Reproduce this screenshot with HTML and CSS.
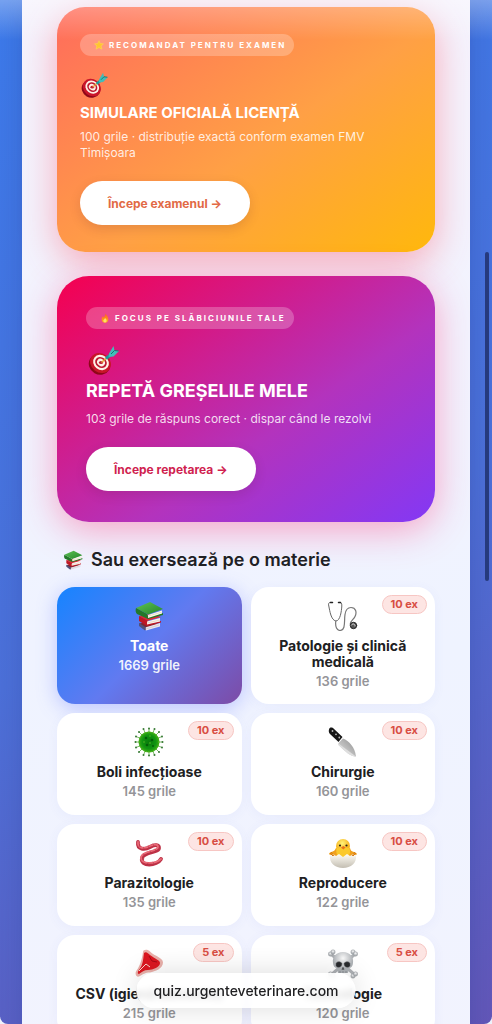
FILE: index.html
```html
<!DOCTYPE html>
<html lang="ro">
<head>
<meta charset="utf-8">
<meta name="viewport" content="width=device-width, initial-scale=1">
<title>Grile medicină veterinară</title>
<link rel="stylesheet" href="styles.css">
</head>
<body>
<svg class="sprite" aria-hidden="true">
  <defs>
    <linearGradient id="leaf" x1="0" y1="0" x2="1" y2="1"><stop offset="0" stop-color="#5fc253"/><stop offset="1" stop-color="#23862a"/></linearGradient>
    <linearGradient id="blade" x1="0" y1="1" x2="1" y2="0"><stop offset="0" stop-color="#e2e2e2"/><stop offset=".5" stop-color="#b9b9b9"/><stop offset="1" stop-color="#8d8d8d"/></linearGradient>
    <radialGradient id="germ"><stop offset="0" stop-color="#087b0b"/><stop offset=".65" stop-color="#109511"/><stop offset="1" stop-color="#3fae18"/></radialGradient>
    <radialGradient id="down" cx=".45" cy=".3"><stop offset="0" stop-color="#fff37a"/><stop offset="1" stop-color="#f7b51f"/></radialGradient>
    <linearGradient id="shell" x1="0" y1="0" x2="0" y2="1"><stop offset="0" stop-color="#fffdf5"/><stop offset="1" stop-color="#c3beb2"/></linearGradient>
    <radialGradient id="bone" cx=".5" cy=".3"><stop offset="0" stop-color="#fafafa"/><stop offset="1" stop-color="#adb1b5"/></radialGradient>
    <linearGradient id="flame" x1="0" y1="0" x2="0" y2="1"><stop offset="0" stop-color="#ff5a20"/><stop offset="1" stop-color="#ffb21e"/></linearGradient>
    <symbol id="target" viewBox="0 0 32 30">
      <ellipse cx="12.500" cy="19.500" rx="11" ry="10" transform="rotate(30 12.500 19.500)" fill="#8e0718"/>
      <ellipse cx="13.500" cy="18" rx="11" ry="9.500" transform="rotate(38 13.500 18)" fill="#c9152a"/>
      <ellipse cx="14" cy="17.500" rx="8.300" ry="7.200" transform="rotate(38 14 17.500)" fill="#fff1e7"/>
      <ellipse cx="14" cy="17.500" rx="6.200" ry="5.200" transform="rotate(38 14 17.500)" fill="#bd1830"/>
      <ellipse cx="14" cy="17.500" rx="4.200" ry="3.400" transform="rotate(38 14 17.500)" fill="#fff1e7"/>
      <ellipse cx="14" cy="17.500" rx="2.100" ry="1.600" fill="#bd1830"/>
      <path d="M14.500 17.500 20 12.500" stroke="#e5a13b" stroke-width="1.500"/>
      <path d="M19 13.500 28 6.500" stroke="#1c9a9d" stroke-width="3"/>
      <path d="M22 8.500 26.500 1l1 4.500 4.500.5-5.500 5.500-5 .5z" fill="#42bdb9"/>
      <path d="m24 9 3.500-3.500 4 .5" stroke="#13716f" fill="none"/>
    </symbol>
    <symbol id="books" viewBox="0 0 30 30">
      <path d="M5 22.500 18 20.500l8 3.500-15 5z" fill="#7c2732"/>
      <path d="m11 26.500 15-4.500v3.500L12 29.500z" fill="#e9e4ee"/><path d="M5 22v3l6 4.500 1-3z" fill="#51517b"/>
      <path d="M5 15 18 13l9 3-14 4z" fill="#dd2b35"/><path d="M5 15v5l8 5 14-3.500V20l-13 3V20z" fill="#be1725"/>
      <path d="m13 20.500 13-3.500v3.500l-13 3z" fill="#fff2e8"/>
      <path d="m2 7 14-6 13 7-15 5.500z" fill="url(#leaf)"/><path d="M2 7c-1 3 0 5 1 6l11 5 15-4v-2l-15 4-1-3z" fill="#247829"/>
      <path d="m14 14 14-4.500v3L14 17z" fill="#fffbea"/>
      <path d="m14 15.200 14-4.200M13 22l13-3M12 28l13-4" stroke="#b9b0a2" stroke-width=".4"/>
    </symbol>
  </defs>
</svg>
<div class="screen">
  <main class="panel">
    <section class="hero hero-exam">
      <p class="tag"><svg class="tag-icon" viewBox="0 0 12 12" aria-hidden="true"><path d="m6 .8 1.600 3.500 3.800.3-2.900 2.500 1 3.900L6 9 2.500 11l1-3.900L.6 4.600l3.800-.3z" fill="#ffc531" stroke="#ffdc50" stroke-width=".6"/></svg>RECOMANDAT PENTRU EXAMEN</p>
      <svg class="hero-icon" aria-hidden="true"><use href="#target"/></svg>
      <h2 class="hero-title">SIMULARE OFICIALĂ LICENȚĂ</h2>
      <p class="hero-text">100 grile · distribuție exactă conform examen FMV Timișoara</p>
      <button class="cta" type="button">Începe examenul →</button>
    </section>
    <section class="hero hero-review">
      <p class="tag"><svg class="tag-icon" viewBox="0 0 12 12" aria-hidden="true"><path d="M6.500.5C8.200 3 10 4.700 10 7.500 10 10 8.500 11.700 6 11.700S2 10 2 7.500C2 6 2.500 5 3.200 4l.9 1.300C5.500 4 6.500 2.700 6.500.5z" fill="url(#flame)"/><path d="M6.200 6c1 1.200 1.800 2 1.800 3.300A2 2 0 0 1 6 11.300a2 2 0 0 1-2-2C4 8 5.500 7.400 6.200 6z" fill="#ffe164"/></svg>FOCUS PE SLĂBICIUNILE TALE</p>
      <svg class="hero-icon" aria-hidden="true"><use href="#target"/></svg>
      <h2 class="hero-title">REPETĂ GREȘELILE MELE</h2>
      <p class="hero-text">103 grile de răspuns corect · dispar când le rezolvi</p>
      <button class="cta" type="button">Începe repetarea →</button>
    </section>

    <h2 class="section-title"><svg class="section-icon" aria-hidden="true"><use href="#books"/></svg>Sau exersează pe o materie</h2>
    <div class="subjects">
      <button class="subject active" type="button">
        <svg class="subject-icon" aria-hidden="true"><use href="#books"/></svg>
        <span class="name">Toate</span><span class="count">1669 grile</span>
      </button>
      <button class="subject" type="button">
        <span class="badge">10 ex</span>
        <svg class="subject-icon" viewBox="0 0 30 30" aria-hidden="true" fill="none" stroke-linecap="round"><path d="M4 1.500C1 1 0 2 .8 5c1 5 2.200 14 7 15 4.500 0 5.700-10 6-15 .2-3-.8-4-3.300-3.500" stroke="#666" stroke-width="1"/><path d="M2.500 1.500h2M10.500 1.500h2" stroke="#222" stroke-width="1.500"/><path d="M7.800 20C7 26 9 29.500 12 29.500c6 0 4-10 5-16 .7-5 3-7 6-7 5 0 6 5 4 9-1.200 3-6 5-4.500 8.500" stroke="#777" stroke-width="1.200"/><circle cx="25.500" cy="24.500" r="3.200" fill="#555" stroke="#222"/><path d="M23.500 24c1-2 4-1 3.500 1" stroke="#ddd"/></svg>
        <span class="name">Patologie și clinică medicală</span><span class="count">136 grile</span>
      </button>
      <button class="subject" type="button">
        <span class="badge">10 ex</span>
        <svg class="subject-icon" viewBox="0 0 30 30" aria-hidden="true"><g stroke="#58a540" stroke-width=".8"><path d="M15 1v28M1 15h28M5 5l20 20M5 25 25 5M9.500 2l11 26M20.500 2l-11 26M2 9.500l26 11M2 20.500l26-11"/></g><g fill="#397a36"><circle cx="15" cy="1.500" r="1"/><circle cx="15" cy="28.500" r="1"/><circle cx="1.500" cy="15" r="1"/><circle cx="28.500" cy="15" r="1"/><circle cx="5" cy="5" r="1"/><circle cx="25" cy="25" r="1"/><circle cx="5" cy="25" r="1"/><circle cx="25" cy="5" r="1"/><circle cx="9.500" cy="2" r="1"/><circle cx="20.500" cy="28" r="1"/><circle cx="20.500" cy="2" r="1"/><circle cx="9.500" cy="28" r="1"/><circle cx="2" cy="9.500" r="1"/><circle cx="28" cy="20.500" r="1"/><circle cx="2" cy="20.500" r="1"/><circle cx="28" cy="9.500" r="1"/></g><circle cx="15" cy="15" r="10.500" fill="url(#germ)"/><circle cx="15" cy="15" r="9.800" fill="none" stroke="#5fbb22" stroke-width="1" stroke-dasharray="1 1.500"/><g fill="#045c09"><circle cx="12" cy="11" r="1.300"/><circle cx="18" cy="13" r="1.300"/><circle cx="13" cy="18" r="1.300"/><circle cx="19" cy="19" r="1"/></g><g fill="#3ba41c"><circle cx="16" cy="9" r="1"/><circle cx="10" cy="15" r="1"/><circle cx="16" cy="16" r="1"/></g></svg>
        <span class="name">Boli infecțioase</span><span class="count">145 grile</span>
      </button>
      <button class="subject" type="button">
        <span class="badge">10 ex</span>
        <svg class="subject-icon" viewBox="0 0 30 30" aria-hidden="true"><path d="m10.500 16 4.500-4.500C21 14 27 20 28 29.500 22 29 18 25 10.500 18z" fill="url(#blade)"/><path d="m10.500 16.500 17.500 13c-7-.5-10-4.500-17.500-11.500z" fill="#dedede"/><path d="M1 2.500C1.500.5 3 0 5 1l9.500 9-4 5L2 7C.8 5.500.5 4 1 2.500z" fill="#171717"/><g fill="#bbb"><circle cx="4.500" cy="4" r=".9"/><circle cx="8" cy="7.300" r=".9"/><circle cx="11.300" cy="10.500" r=".9"/></g></svg>
        <span class="name">Chirurgie</span><span class="count">160 grile</span>
      </button>
      <button class="subject" type="button">
        <span class="badge">10 ex</span>
        <svg class="subject-icon" viewBox="0 0 30 30" aria-hidden="true" fill="none" stroke-linecap="round" stroke-linejoin="round"><path d="M4 4c-1 8 7 8 12 5 5-3 9-2 9 1 0 5-15 3-17 10-2 9 15 8 19 1" stroke="#bd3146" stroke-width="3.800"/><path d="M4 4c-1 7 7 7 12 4 5-2 8-2 8 1 0 5-15 3-17 10-1 8 15 7 20 2" stroke="#e96a77" stroke-width="1.800"/><path d="m5 9 1-2M10 11l-.5-2M15 10l-1-2M20 8l-1-2M22 13l-1-2M17 15l-1-2M11 17l-2-1M8 22l2-1M13 27l1-2M20 26l-1-2" stroke="#ad2840" stroke-width=".5"/></svg>
        <span class="name">Parazitologie</span><span class="count">135 grile</span>
      </button>
      <button class="subject" type="button">
        <span class="badge">10 ex</span>
        <svg class="subject-icon" viewBox="0 0 30 30" aria-hidden="true"><path d="M8 10c-2 5-6 3-7 6l6 5h17l5-5c-2-3-6-1-7-6z" fill="#f0a11d"/><circle cx="15" cy="8" r="7" fill="url(#down)"/><path d="M8.500 10c-1 7 1.500 9 6.500 9s8.500-2 6.500-9z" fill="#fbc92c"/><circle cx="12" cy="7.500" r="1.100" fill="#302316"/><circle cx="18.500" cy="7.500" r="1.100" fill="#302316"/><path d="m13 9.500 2.300-1.500 2.300 1.500-2.300 2z" fill="#e8711b"/><path d="m2 17 3-1 3 2 3-2 4 3 4-3 3 2 3-2 3 1c1 8-5 13-13 13S1 25 2 17z" fill="url(#shell)"/><path d="m2 15 3 3m-2-4 3 4m22-3-3 3m2-4-3 4" stroke="#d87b12" stroke-width="1"/></svg>
        <span class="name">Reproducere</span><span class="count">122 grile</span>
      </button>
      <button class="subject" type="button">
        <span class="badge">5 ex</span>
        <svg class="subject-icon" viewBox="0 0 30 30" aria-hidden="true"><path d="M9 3c0-3 5-3 7-.500 5 5 13 6 13 11 0 6-8 9-13 10-5 0-7 2-11 4-3 1-4-3-3-5 3-4 6-11 7-19.500z" fill="#e9b0aa"/><path d="M10 4c2-2 4 0 6 2 5 4 10 5 10 8 0 4-7 7-12 7-4 0-6 2-9 4-2 0-1-3 0-4 4-5 4-10 5-17z" fill="#db1720"/><path d="m12 15-7 7M12 15l4 3" stroke="#f8d8cc" stroke-width="1" fill="none"/><path d="m15 7 3 5 5 1" stroke="#a80915" fill="none"/></svg>
        <span class="name">CSV (igienă alimente)</span><span class="count">215 grile</span>
      </button>
      <button class="subject" type="button">
        <span class="badge">5 ex</span>
        <svg class="subject-icon" viewBox="0 0 30 30" aria-hidden="true"><g stroke="#adb0b4" stroke-width="3"><path d="m3 5 24 21M27 5 3 26"/></g><g fill="url(#bone)" stroke="#999da0" stroke-width=".5"><circle cx="2.500" cy="5" r="2.200"/><circle cx="5" cy="3" r="2.200"/><circle cx="25" cy="3" r="2.200"/><circle cx="27.500" cy="5" r="2.200"/><circle cx="2.500" cy="25" r="2.200"/><circle cx="5" cy="27" r="2.200"/><circle cx="25" cy="27" r="2.200"/><circle cx="27.500" cy="25" r="2.200"/></g><path d="M15 3c7 0 11 5 10 11 0 3-2 5-4 5l-1 5H10l-1-5c-2 0-4-2-4-5C4 8 8 3 15 3z" fill="url(#bone)"/><path d="M8 14.500c1-2.500 5-2 6 0 0 4-4 5-6 2.500zm8 0c1-2 5-2.500 6 0V17c-2 2.500-6 1.500-6-2.500zM15 18l-1.200 2.500h2.400zM12 22v2m3-2v2m3-2v2" fill="#282a2d" stroke="#66696c" stroke-width=".5"/></svg>
        <span class="name">Toxicologie</span><span class="count">120 grile</span>
      </button>
    </div>
  </main>
  <div class="top-haze"></div>
  <div class="scroll-thumb"></div>
  <a class="address" href="#">quiz.urgenteveterinare.com</a>
</div>
</body>
</html>
```
FILE: styles.css
```css
* { box-sizing: border-box; }

body {
  margin: 0;
  background: #eef2fb;
  font-family: Inter, "Noto Sans", sans-serif;
  color: #202024;
}

h2, p { margin: 0; }
button { font: inherit; border: 0; cursor: pointer; }
a { color: inherit; text-decoration: none; }
.sprite { position: absolute; width: 0; height: 0; }

.screen {
  position: relative;
  height: 100vh;
  overflow: hidden;
  padding: 0 22px;
  border-radius: 0 0 8px 8px;
  background: linear-gradient(155deg, #3c7aea, #4c70d8 55%, #6357b8);
}

.panel {
  min-height: 100%;
  padding: 7px 35px 40px;
  background: linear-gradient(#f5f3fd, #eff3ff 60%, #f2f3fe);
  box-shadow: 0 0 24px rgba(30, 50, 130, 0.25);
}

.hero {
  border-radius: 28px;
  color: #fff;
}
.hero-exam {
  padding: 27px 23px;
  background: linear-gradient(145deg, #ff6b5c, #ffa045 55%, #ffb80c);
  box-shadow: 0 10px 36px rgba(255, 80, 100, 0.44);
}
.hero-review {
  margin-top: 24px;
  padding: 31px 29px;
  border-radius: 32px;
  background: linear-gradient(145deg, #f5004f, #b333bd 60%, #8338f5);
  box-shadow: 0 8px 36px rgba(255, 50, 120, 0.42);
}

.tag {
  display: inline-flex;
  align-items: center;
  gap: 5px;
  height: 22px;
  padding: 0 8px 0 14px;
  border-radius: 11px;
  background: rgba(255, 255, 255, 0.24);
  font-size: 8px;
  font-weight: 700;
  letter-spacing: 2px;
  white-space: nowrap;
}
.tag-icon { width: 10px; height: 10px; flex: none; }

.hero-icon {
  display: block;
  width: 28px;
  height: 26px;
  margin-top: 16px;
}
.hero-title {
  margin-top: 4px;
  font-size: 15px;
  font-weight: 700;
  line-height: 22px;
}
.hero-text {
  margin-top: 5px;
  color: rgba(255, 255, 255, 0.85);
  font-size: 12px;
  line-height: 16px;
}
.hero-review .hero-icon { width: 34px; height: 30px; }
.hero-review .hero-title { font-size: 18px; line-height: 24px; }
.hero-review .hero-text { margin-top: 8px; }

.cta {
  display: block;
  height: 44px;
  margin-top: 20px;
  padding: 0 28px;
  border-radius: 22px;
  background: #fff;
  box-shadow: 0 4px 12px rgba(80, 20, 40, 0.14);
  color: #e26a45;
  font-size: 12px;
  font-weight: 700;
}
.hero-review .cta { color: #d01f50; }

.section-title {
  display: flex;
  align-items: center;
  gap: 8px;
  margin: 25px 0 14px 6px;
  font-size: 18px;
  font-weight: 600;
  line-height: 26px;
}
.section-icon { width: 20px; height: 20px; }

.subjects {
  display: grid;
  grid-template-columns: 1fr 1fr;
  gap: 9px;
}
.subject {
  position: relative;
  display: flex;
  flex-direction: column;
  align-items: center;
  min-width: 0;
  min-height: 102px;
  padding: 14px 16px 15px;
  border-radius: 18px;
  background: #fff;
  box-shadow: 0 2px 12px rgba(90, 110, 220, 0.06);
  color: #202022;
}
.subject.active {
  background: linear-gradient(135deg, #1684ff, #617af0 50%, #7d4ba6);
  box-shadow: 0 4px 20px rgba(90, 110, 255, 0.36);
  color: #fff;
}
.subject-icon { width: 30px; height: 30px; flex: none; }
.name {
  margin-top: 7px;
  font-size: 14px;
  font-weight: 700;
  line-height: 16px;
}
.count {
  margin-top: 3px;
  color: #949498;
  font-size: 13px;
  font-weight: 600;
  line-height: 16px;
}
.active .count { color: rgba(255, 255, 255, 0.92); }
.badge {
  position: absolute;
  top: 8px;
  right: 8px;
  padding: 0 8px;
  border: 1px solid #f7c6c3;
  border-radius: 10px;
  background: #fde5e3;
  color: #d84e43;
  font-size: 11px;
  font-weight: 700;
  line-height: 17px;
}

.top-haze {
  position: absolute;
  inset: 0 0 auto;
  height: 40px;
  background: linear-gradient(rgba(255, 255, 255, 0.3), transparent);
  pointer-events: none;
}
.scroll-thumb {
  position: absolute;
  top: 252px;
  right: 3px;
  width: 4px;
  height: 329px;
  border-radius: 2px;
  background: #263a7d;
}
.address {
  position: absolute;
  bottom: 16px;
  left: 50%;
  transform: translateX(-50%);
  padding: 0 17px;
  border-radius: 18px;
  background: rgba(255, 255, 255, 0.86);
  backdrop-filter: blur(3px);
  box-shadow: 0 0 28px rgba(0, 0, 0, 0.14);
  color: #202022;
  font-size: 14px;
  font-weight: 500;
  line-height: 35px;
  white-space: nowrap;
}
```
